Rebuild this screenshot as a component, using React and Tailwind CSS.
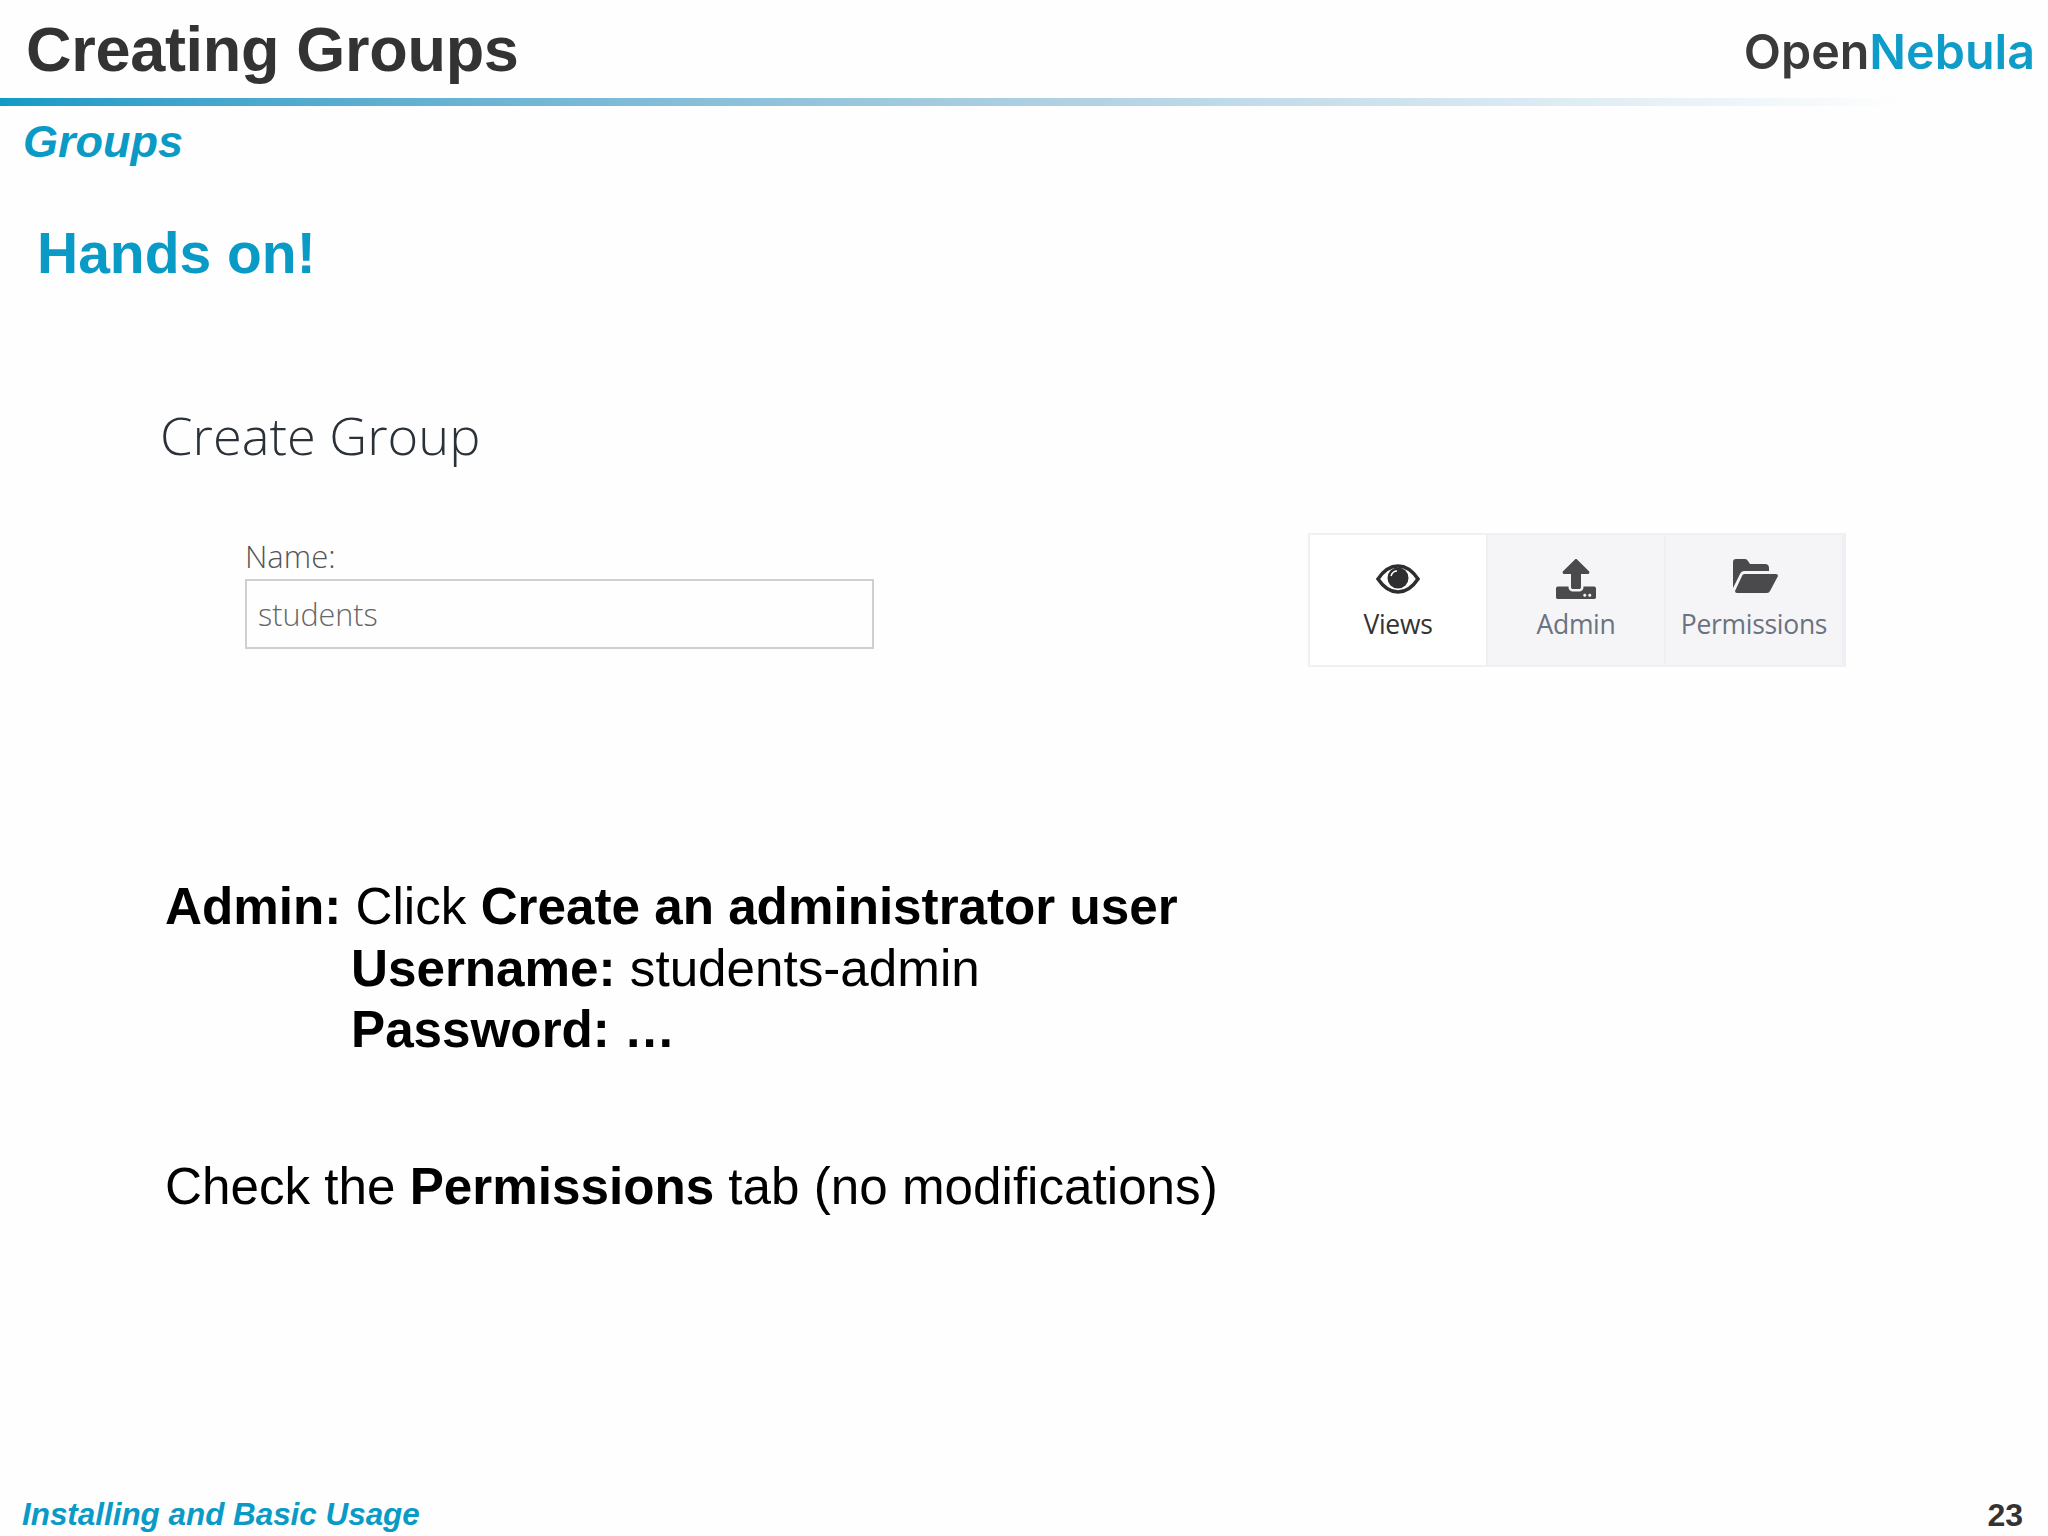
import { FaUpload } from 'react-icons/fa'

const arial = "font-['Liberation_Sans',Arial,sans-serif]"

function Eye() {
  return (
    <svg width="44" height="30" viewBox="0 0 44 30">
      <path d="M2 15C8 6 15 2 22 2s14 4 20 13c-6 9-13 13-20 13S8 24 2 15z" fill="none" stroke="#2e2e30" strokeWidth="3.5" />
      <circle cx="22" cy="14" r="10.5" fill="#2e2e30" />
      <path d="M15 12c1-3 3-5 6-5" fill="none" stroke="#fff" strokeWidth="1.5" />
    </svg>
  )
}

function FolderOpen() {
  return (
    <svg width="46" height="36" viewBox="0 0 46 36" fill="#4a4a4c" className="mt-[-6px] ml-[3px]">
      <path d="M0 4a3 3 0 0 1 3-3h9a4 4 0 0 1 3 2l2 3h15a4 4 0 0 1 4 4v3H12a5 5 0 0 0-5 3L0 30z" />
      <path d="M11 16h32a2 2 0 0 1 2 2l-8 15a4 4 0 0 1-3 2H4a2 2 0 0 1-2-2l7-15a3 3 0 0 1 2-2z" />
    </svg>
  )
}

function Tab({ icon, label, active }) {
  return (
    <div className={`w-[178px] flex flex-col items-center pt-[22px] border-r-2 border-[#f0eff3] ${active ? 'bg-white text-[#333]' : 'bg-[#f5f5f8] text-[#6b7280]'}`}>
      <span className="h-[44px] text-[#4a4a4c] flex items-center">{icon}</span>
      <span className="mt-[7px] text-[26.5px] leading-[32px] tracking-[-0.3px] font-['Open_Sans',sans-serif]">{label}</span>
    </div>
  )
}

export default function App() {
  return (
    <div className={`w-[2048px] h-[1536px] bg-[#fefefe] flex flex-col overflow-hidden ${arial}`}>
      {/* Header */}
      <div className="h-[98px] flex items-start justify-between pl-[26px] pr-[13px]">
        <h1 className="text-[63px] leading-[74px] mt-[12px] tracking-[-0.3px] font-bold text-[#333333]">Creating Groups</h1>
        <div className="mt-[20px] text-[48.4px] leading-[64px] font-semibold font-['Inter',sans-serif]">
          <span className="text-[#3a3a3a]">Open</span><span className="text-[#0f9cc9]">Nebula</span>
        </div>
      </div>
      <div className="h-[8px] bg-gradient-to-r from-[#0f9bc6] via-[#a8cde0] via-48% to-[#fefefe] to-93%" />

      <div className="pl-[23px] mt-[10px] text-[45px] leading-[52px] font-bold italic text-[#0a9ac6]">Groups</div>
      <div className="pl-[37px] mt-[52px] text-[57px] leading-[66px] font-bold text-[#0a9ac6]">Hands on!</div>

      {/* Screenshot area */}
      <div className="mt-[119px] pl-[160px] text-[52.4px] leading-[60px] font-light text-[#2b3138] font-['Open_Sans',sans-serif]">Create Group</div>
      <div className="mt-[72px] flex items-start justify-between pl-[245px] pr-[202px]">
        <div className="pt-[1px]">
          <div className="text-[31px] leading-[36px] text-[#555] font-light font-['Open_Sans',sans-serif]">Name:</div>
          <div className="mt-[5px] w-[629px] h-[70px] border-2 border-[#cfcfd3] flex items-center pl-[11px] pt-[2px] text-[30.5px] text-[#666] font-light font-['Open_Sans',sans-serif]">students</div>
        </div>
        <div className="mt-[-4px] flex h-[134px] border-2 border-[#f0eff3]">
          <Tab icon={<Eye />} label="Views" active />
          <Tab icon={<FaUpload size={40} />} label="Admin" />
          <Tab icon={<FolderOpen />} label="Permissions" />
        </div>
      </div>

      {/* Instructions */}
      <div className="mt-[209px] pl-[165px] text-[51.2px] leading-[61.5px] text-black">
        <div><b>Admin:</b> Click <b>Create an administrator user</b></div>
        <div className="pl-[186px]"><b>Username:</b> students-admin</div>
        <div className="pl-[186px]"><b>Password: …</b></div>
        <div className="mt-[95px]">Check the <b>Permissions</b> tab (no modifications)</div>
      </div>

      {/* Footer */}
      <div className="mt-auto pl-[22px] pr-[25px] pb-[1px] flex items-end justify-between">
        <span className="text-[31.4px] leading-[40px] font-bold italic text-[#0a9ac6]">Installing and Basic Usage</span>
        <span className="text-[32px] leading-[40px] font-bold text-[#333]">23</span>
      </div>
    </div>
  )
}
